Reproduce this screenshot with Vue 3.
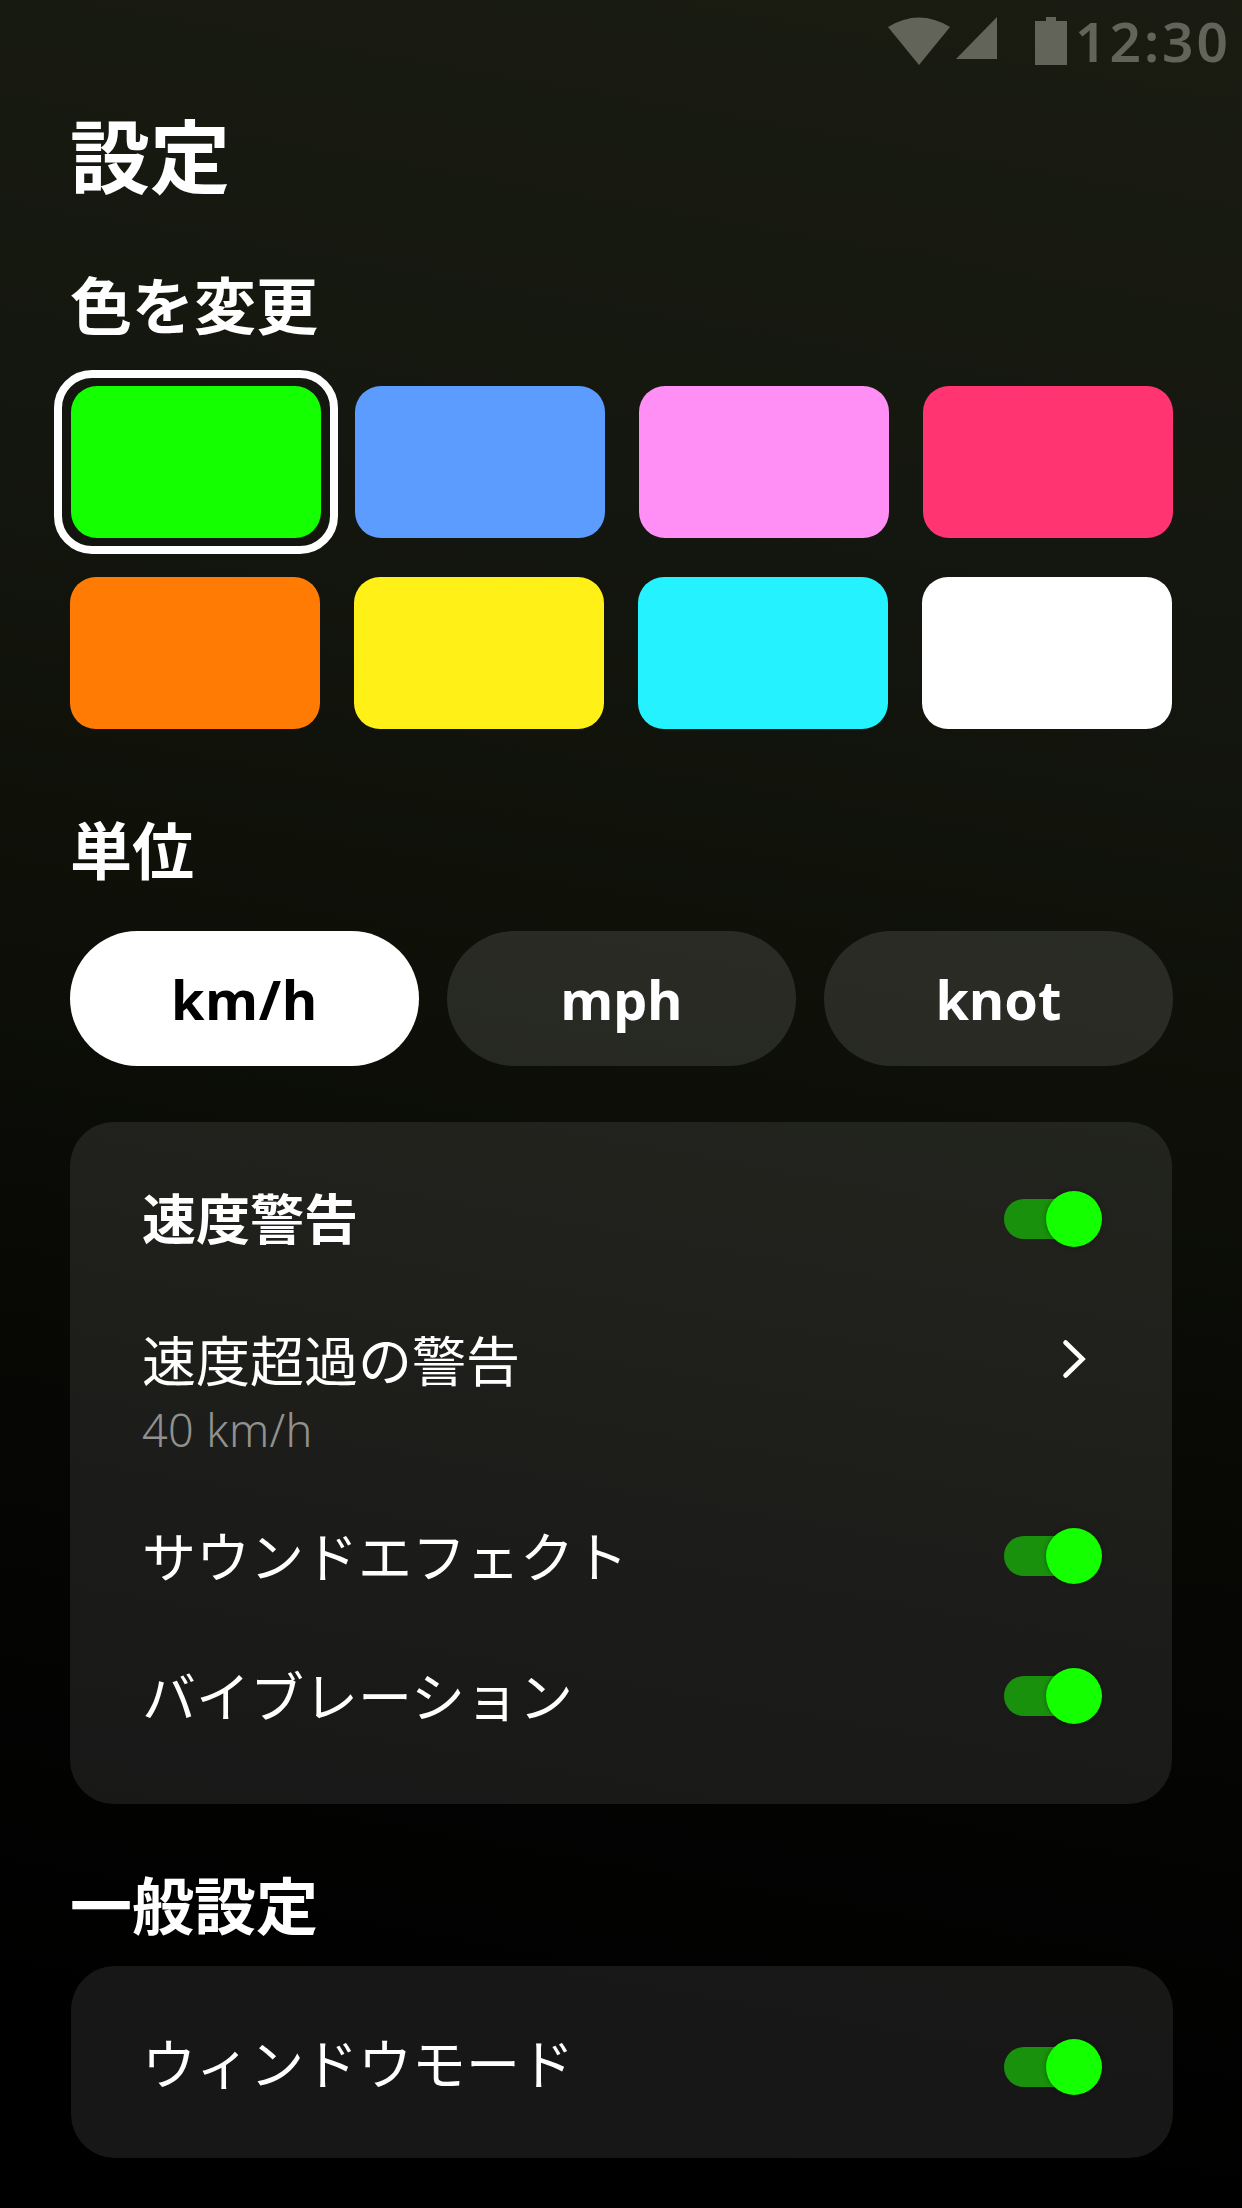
<script setup>
import { ref } from 'vue'

const swatchRows = [
  ['#14ff00', '#5c9cff', '#ff8ff5', '#ff3470'],
  ['#ff7b04', '#fff017', '#24f3ff', '#ffffff'],
]
const selectedColor = ref('#14ff00')

const units = ['km/h', 'mph', 'knot']
const selectedUnit = ref('km/h')

const toggles = ref({ warning: true, sound: true, vibration: true, windowed: true })
</script>

<template>
  <div class="screen">
    <header class="status">
      <svg class="status-icons" width="180" height="50" viewBox="0 0 180 50" fill="currentColor">
        <path d="M0 10Q31 -9 62 10L31 48Z" />
        <path d="M68 42H109V0Z" />
        <path d="M147 4H158V0H168V4H179V48H147Z" />
      </svg>
      <span class="clock">12:30</span>
    </header>

    <h1>設定</h1>

    <h2 class="h-color">色を変更</h2>
    <div class="palette">
      <div v-for="(row, i) in swatchRows" :key="i" class="swatch-row">
        <button
          v-for="color in row"
          :key="color"
          class="swatch"
          :class="{ selected: color === selectedColor }"
          :style="{ background: color }"
          @click="selectedColor = color"
        ></button>
      </div>
    </div>

    <h2 class="h-unit">単位</h2>
    <div class="units">
      <button
        v-for="unit in units"
        :key="unit"
        class="unit"
        :class="{ active: unit === selectedUnit }"
        @click="selectedUnit = unit"
      >{{ unit }}</button>
    </div>

    <section class="card warning-card">
      <div class="row">
        <span class="label strong">速度警告</span>
        <button class="toggle" @click="toggles.warning = !toggles.warning"><i></i></button>
      </div>
      <div class="row limit">
        <span class="label">速度超過の警告</span>
        <svg class="chevron" width="24" height="40" viewBox="0 0 24 40">
          <path d="M3.5 3.5L20.5 20L3.5 36.5" fill="none" stroke="#fff" stroke-width="4.6" stroke-linecap="round" />
        </svg>
      </div>
      <div class="value">40 km/h</div>
      <div class="row">
        <span class="label">サウンドエフェクト</span>
        <button class="toggle" @click="toggles.sound = !toggles.sound"><i></i></button>
      </div>
      <div class="row vibration">
        <span class="label">バイブレーション</span>
        <button class="toggle" @click="toggles.vibration = !toggles.vibration"><i></i></button>
      </div>
    </section>

    <h2 class="h-general">一般設定</h2>
    <section class="card general-card">
      <div class="row">
        <span class="label window-label">ウィンドウモード</span>
        <button class="toggle" @click="toggles.windowed = !toggles.windowed"><i></i></button>
      </div>
    </section>
  </div>
</template>

<style>
body {
  margin: 0;
  background: #000;
}
</style>

<style scoped>
.screen {
  box-sizing: border-box;
  width: 1242px;
  height: 2208px;
  overflow: hidden;
  display: flex;
  flex-direction: column;
  padding: 0 69px 0 70px;
  color: #fff;
  font-family: 'Noto Sans CJK JP', sans-serif;
  background: linear-gradient(190deg, #1a1c12 0%, #14170f 25%, #0f1109 43%, #0a0b06 56%, #040403 74%, #000 93%);
}
button {
  border: 0;
  padding: 0;
  font: inherit;
  color: inherit;
}
.status {
  flex: none;
  height: 82px;
  margin-right: -57px;
  display: flex;
  justify-content: flex-end;
  align-items: flex-start;
  color: #62645a;
}
.status-icons {
  flex: none;
  margin: 17px 7px 0 0;
}
.clock {
  width: 155px;
  font: 600 55px/82px 'Noto Sans', sans-serif;
  letter-spacing: 3px;
  white-space: nowrap;
}
h1,
h2 {
  margin: 0;
  flex: none;
  font-weight: 700;
}
h1 {
  font-size: 80px;
  line-height: 140px;
}
h2 {
  font-size: 62px;
  line-height: 80px;
}
.h-color {
  margin-top: 41px;
}
.palette {
  margin-top: 43px;
  display: flex;
  flex-direction: column;
  gap: 39px;
}
.swatch-row {
  display: flex;
  gap: 34px;
}
.swatch-row:first-child {
  margin-left: 1px;
  margin-right: -1px;
}
.swatch {
  flex: none;
  width: 250px;
  height: 152px;
  border-radius: 26px;
  position: relative;
}
.swatch.selected::after {
  content: '';
  position: absolute;
  inset: -16px -17px;
  border: 8px solid #fff;
  border-radius: 38px;
}
.h-unit {
  margin-top: 79px;
}
.units {
  margin-top: 43px;
  display: flex;
  gap: 28px;
}
.unit {
  flex: none;
  width: 349px;
  height: 134.5px;
  border-radius: 68px;
  background: rgba(255, 255, 255, 0.11);
  font: 700 54px/132px 'Noto Sans', sans-serif;
  padding-top: 2px;
}
.unit.active {
  background: #fff;
  color: #000;
  letter-spacing: 0.8px;
}
.card {
  box-sizing: border-box;
  flex: none;
  border-radius: 44px;
  background: rgba(255, 252, 255, 0.09);
}
.warning-card {
  width: 1102px;
  height: 682px;
  margin-top: 56.5px;
  padding: 57px 70px 0 72px;
}
.row {
  height: 80px;
  display: flex;
  align-items: center;
  justify-content: space-between;
}
.label {
  font-size: 54px;
  font-weight: 400;
  line-height: 80px;
  padding-bottom: 2px;
}
.label.strong {
  font-weight: 700;
  padding-bottom: 4px;
}
.limit {
  margin-top: 60px;
}
.limit .label {
  padding-bottom: 0;
}
.chevron {
  flex: none;
  margin-right: 16px;
}
.value {
  padding-top: 1px;
  margin-bottom: 57px;
  font: 300 45px/59px 'Noto Sans', sans-serif;
  letter-spacing: 0.4px;
  color: #91918f;
}
.vibration {
  margin-top: 60px;
}
.toggle {
  flex: none;
  width: 98px;
  height: 40px;
  border-radius: 20px;
  display: flex;
  align-items: center;
  justify-content: flex-end;
  background: linear-gradient(90deg, #1a910d 0 70px, transparent 70px);
}
.toggle i {
  flex: none;
  width: 56px;
  height: 56px;
  border-radius: 50%;
  background: #14ff00;
  box-shadow: 0 0 5px rgba(0, 0, 0, 0.35);
}
.h-general {
  margin-top: 59px;
}
.general-card {
  width: 1102px;
  height: 192px;
  margin: 23px 0 0 1px;
  padding: 61px 71px 0 71px;
}
.window-label {
  padding-bottom: 10px;
}
</style>
